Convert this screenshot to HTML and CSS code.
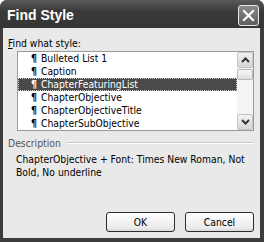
FILE: index.html
```html
<!DOCTYPE html>
<html lang="en">
<head>
  <meta charset="UTF-8">
  <title>Find Style</title>
  <link rel="stylesheet" href="styles.css">
</head>
<body>

<div class="window">
  <div class="titlebar">
    <span class="title">Find Style</span>
    <button class="close-btn" type="button">
      <svg width="13" height="13" viewBox="0 0 13 13">
        <path d="M2 2 L11 11 M11 2 L2 11" stroke="#fff" stroke-width="2.2" stroke-linecap="square"/>
      </svg>
    </button>
  </div>

  <div class="dialog">
    <label class="field-label"><u>F</u>ind what style:</label>

    <div class="listbox">
      <ul class="items">
        <li><span class="pil">¶</span>Bulleted List 1</li>
        <li><span class="pil">¶</span>Caption</li>
        <li class="selected"><span class="pil">¶</span>ChapterFeaturingList</li>
        <li><span class="pil">¶</span>ChapterObjective</li>
        <li><span class="pil">¶</span>ChapterObjectiveTitle</li>
        <li><span class="pil">¶</span>ChapterSubObjective</li>
      </ul>
      <div class="scrollbar">
        <div class="sb-btn">
          <svg width="9" height="6" viewBox="0 0 9 6"><path d="M1 5 L4.5 1.5 L8 5" fill="none" stroke="#333" stroke-width="2"/></svg>
        </div>
        <div class="sb-track">
          <div class="sb-thumb"></div>
        </div>
        <div class="sb-btn">
          <svg width="9" height="6" viewBox="0 0 9 6"><path d="M1 1 L4.5 4.5 L8 1" fill="none" stroke="#333" stroke-width="2"/></svg>
        </div>
      </div>
    </div>

    <div class="group-head">
      <span>Description</span>
      <div class="rule"></div>
    </div>
    <p class="desc">ChapterObjective + Font: Times New Roman, Not Bold, No underline</p>

    <div class="actions">
      <button class="btn" type="button">OK</button>
      <button class="btn" type="button">Cancel</button>
    </div>
  </div>
</div>

</body>
</html>
```

FILE: styles.css
```css
body {
  margin: 0;
  background: #fff;
  font-family: "DejaVu Sans Condensed", "DejaVu Sans", sans-serif;
  font-size: 10.3px;
  color: #000;
}
.window {
  width: 264px;
  height: 242px;
  background: #3c3c3c;
  border-radius: 7px 7px 0 0;
  display: flex;
  flex-direction: column;
}
.titlebar {
  height: 28px;
  display: flex;
  align-items: center;
  justify-content: space-between;
  padding: 0 5px 0 7px;
  background: linear-gradient(#5a5a5a, #3a3a3a 40%, #353535);
  border-radius: 7px 7px 0 0;
}
.title {
  color: #fff;
  font-family: "Liberation Sans", sans-serif;
  font-weight: bold;
  font-size: 14px;
  margin-top: 1px;
}
.close-btn {
  width: 21px;
  height: 21px;
  padding: 0;
  border: 1px solid #e8e8e8;
  border-radius: 3px;
  background: linear-gradient(#8a8a8a, #5e5e5e);
  display: flex;
  align-items: center;
  justify-content: center;
  margin-top: 2px;
}
.dialog {
  flex: 1;
  margin: 0 4px 4px 3px;
  background: #e9e9e9;
  padding: 9px 5px 0 5px;
  display: flex;
  flex-direction: column;
}
.field-label {
  display: block;
  height: 14px;
  line-height: 12px;
}
.listbox {
  margin: 0 1px 0 9px;
  height: 78px;
  border: 1px solid #9a9a9a;
  background: #fff;
  display: flex;
}
.items {
  flex: 1;
  list-style: none;
  margin: 0;
  padding: 0;
}
.items li {
  height: 13px;
  line-height: 13px;
  padding-left: 13px;
  white-space: nowrap;
}
.pil {
  font-weight: bold;
  margin-right: 4px;
}
.items li.selected {
  background: #4a4a4a;
  color: #fff;
  outline: 1px dotted #ccc;
  outline-offset: -1px;
}
.scrollbar {
  width: 16px;
  display: flex;
  flex-direction: column;
  background: #f4f4f4;
}
.sb-btn {
  height: 16px;
  border: 1px solid #c4c4c4;
  border-radius: 2px;
  background: linear-gradient(#f2f2f2, #d6d6d6);
  display: flex;
  align-items: center;
  justify-content: center;
  box-sizing: border-box;
}
.sb-track {
  flex: 1;
  padding-top: 1px;
}
.sb-thumb {
  height: 9px;
  border: 1px solid #b8b8b8;
  border-radius: 2px;
  background: linear-gradient(#f6f6f6, #e0e0e0);
}
.group-head {
  display: flex;
  align-items: center;
  margin-top: 5px;
  color: #555;
  height: 13px;
}
.rule {
  flex: 1;
  height: 1px;
  background: #c8c8c8;
  border-bottom: 1px solid #fff;
  margin: 0 1px 0 6px;
}
.desc {
  margin: 4px 0 0 8px;
  line-height: 13px;
  width: 238px;
}
.actions {
  margin-top: auto;
  margin-bottom: 6px;
  display: flex;
  justify-content: flex-end;
  gap: 10px;
  padding-right: 1px;
}
.btn {
  width: 69px;
  height: 20px;
  font-family: inherit;
  font-size: 10.3px;
  border: 1px solid #2e2e2e;
  border-radius: 3px;
  background: linear-gradient(#fdfdfd, #ececec 80%, #dadada);
  padding: 0;
}
```
